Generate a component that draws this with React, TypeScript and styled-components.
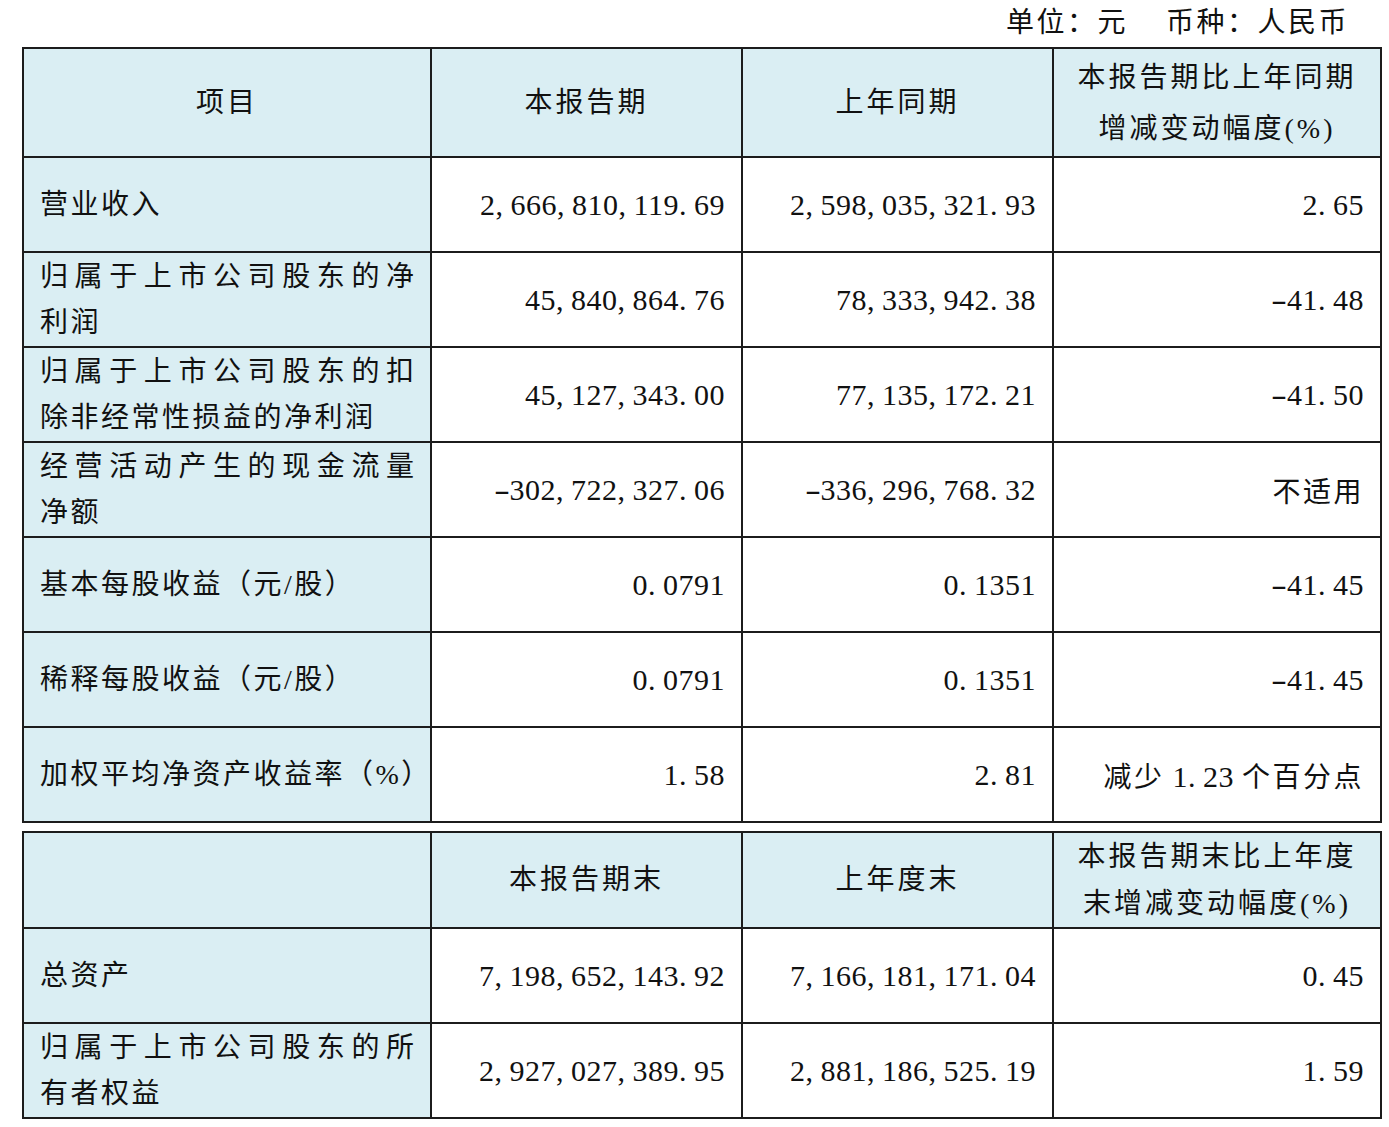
import styled, { createGlobalStyle } from 'styled-components'

const GlobalStyle = createGlobalStyle`
    html, body {
        margin: 0;
        padding: 0;
        background: #ffffff;
    }
    body {
        font-family: 'Liberation Serif', 'Noto Sans CJK SC', serif;
        color: #111111;
    }
`

type Row = { label: string[]; cur: string; prev: string; change: string }

const incomeRows: Row[] = [
    { label: ['营业收入'], cur: '2,666,810,119.69', prev: '2,598,035,321.93', change: '2.65' },
    {
        label: ['归属于上市公司股东的净', '利润'],
        cur: '45,840,864.76',
        prev: '78,333,942.38',
        change: '-41.48'
    },
    {
        label: ['归属于上市公司股东的扣', '除非经常性损益的净利润'],
        cur: '45,127,343.00',
        prev: '77,135,172.21',
        change: '-41.50'
    },
    {
        label: ['经营活动产生的现金流量', '净额'],
        cur: '-302,722,327.06',
        prev: '-336,296,768.32',
        change: '不适用'
    },
    { label: ['基本每股收益（元/股）'], cur: '0.0791', prev: '0.1351', change: '-41.45' },
    { label: ['稀释每股收益（元/股）'], cur: '0.0791', prev: '0.1351', change: '-41.45' },
    { label: ['加权平均净资产收益率（%）'], cur: '1.58', prev: '2.81', change: '减少 1.23 个百分点' }
]

const assetRows: Row[] = [
    { label: ['总资产'], cur: '7,198,652,143.92', prev: '7,166,181,171.04', change: '0.45' },
    {
        label: ['归属于上市公司股东的所', '有者权益'],
        cur: '2,927,027,389.95',
        prev: '2,881,186,525.19',
        change: '1.59'
    }
]

// SimSun-like look: separators take a full half-width slot like the digits
const Num = ({ value }: { value: string }) => (
    <>
        {value.split('').map((ch, i) =>
            ch === ',' || ch === '.' || ch === '-' ? (
                <Sep key={i} $dash={ch === '-'}>
                    {ch}
                </Sep>
            ) : ch.charCodeAt(0) > 255 ? (
                <Wide key={i}>{ch}</Wide>
            ) : (
                <span key={i}>{ch}</span>
            )
        )}
    </>
)

const Label = ({ lines }: { lines: string[] }) => (
    <>
        {lines.map((line, i) => (
            <LabelLine key={i} $stretch={lines.length > 1 && i < lines.length - 1}>
                {line}
            </LabelLine>
        ))}
    </>
)

const DataTable = (props: { head: string[]; change: string[]; tall?: boolean; rows: Row[] }) => (
    <Table>
        <colgroup>
            <col style={{ width: 408 }} />
            <col style={{ width: 311 }} />
            <col style={{ width: 311 }} />
            <col style={{ width: 328 }} />
        </colgroup>
        <tbody>
            <HeadRow $tall={!!props.tall}>
                <HeadCell>{props.head[0]}</HeadCell>
                <HeadCell>{props.head[1]}</HeadCell>
                <HeadCell>{props.head[2]}</HeadCell>
                <HeadCell $lh={props.tall ? 51 : 47}>
                    {props.change.map((l, i) => (
                        <div key={i}>{l}</div>
                    ))}
                </HeadCell>
            </HeadRow>
            {props.rows.map((r, i) => (
                <BodyRow key={i}>
                    <LabelCell>
                        <Label lines={r.label} />
                    </LabelCell>
                    <NumCell>
                        <Num value={r.cur} />
                    </NumCell>
                    <NumCell>
                        <Num value={r.prev} />
                    </NumCell>
                    <NumCell>
                        <Num value={r.change} />
                    </NumCell>
                </BodyRow>
            ))}
        </tbody>
    </Table>
)

const App = () => (
    <Page>
        <GlobalStyle />
        <Caption>
            <span>单位：元</span>
            <span>币种：人民币</span>
        </Caption>
        <DataTable
            head={['项目', '本报告期', '上年同期']}
            change={['本报告期比上年同期', '增减变动幅度(%)']}
            tall
            rows={incomeRows}
        />
        <Gap />
        <DataTable
            head={['', '本报告期末', '上年度末']}
            change={['本报告期末比上年度', '末增减变动幅度(%)']}
            rows={assetRows}
        />
    </Page>
)

export default App

const Page = styled.div`
    width: 1389px;
    padding-left: 22px;
    box-sizing: border-box;
`
const Caption = styled.div`
    display: flex;
    justify-content: flex-end;
    gap: 38px;
    height: 47px;
    line-height: 46px;
    padding-right: 40px;
    font-size: 28px;
    letter-spacing: 2.5px;
`
const Gap = styled.div`
    height: 8px;
`
const Table = styled.table`
    width: 1358px;
    table-layout: fixed;
    border-collapse: collapse;
    font-size: 28px;
    td {
        border: 2px solid #1c1c1c;
        padding: 0 17px;
        vertical-align: middle;
    }
`
const HeadRow = styled.tr<{ $tall: boolean }>`
    height: ${p => (p.$tall ? 109 : 95)}px;
`
const BodyRow = styled.tr`
    height: 95px;
`
const HeadCell = styled.td<{ $lh?: number }>`
    background: #daeef3;
    text-align: center;
    line-height: ${p => p.$lh ?? 46}px;
    letter-spacing: 3px;
    white-space: nowrap;
`
const LabelCell = styled.td`
    background: #daeef3;
    line-height: 46px;
    && {
        padding-left: 16px;
        padding-right: 16px;
    }
`
const LabelLine = styled.div<{ $stretch: boolean }>`
    text-align: ${p => (p.$stretch ? 'justify' : 'left')};
    text-align-last: ${p => (p.$stretch ? 'justify' : 'auto')};
    letter-spacing: ${p => (p.$stretch ? '0' : '2.5px')};
    white-space: ${p => (p.$stretch ? 'normal' : 'nowrap')};
`
const NumCell = styled.td`
    text-align: right;
    font-size: 30px;
    letter-spacing: 0.5px;
    white-space: nowrap;
    && {
        padding-right: 16px;
    }
`
const Sep = styled.span<{ $dash: boolean }>`
    display: inline-block;
    width: 15px;
    text-align: ${p => (p.$dash ? 'center' : 'left')};
    transform: ${p => (p.$dash ? 'scaleX(1.6)' : 'none')};
`
const Wide = styled.span`
    font-size: 28px;
    letter-spacing: 2.5px;
`
